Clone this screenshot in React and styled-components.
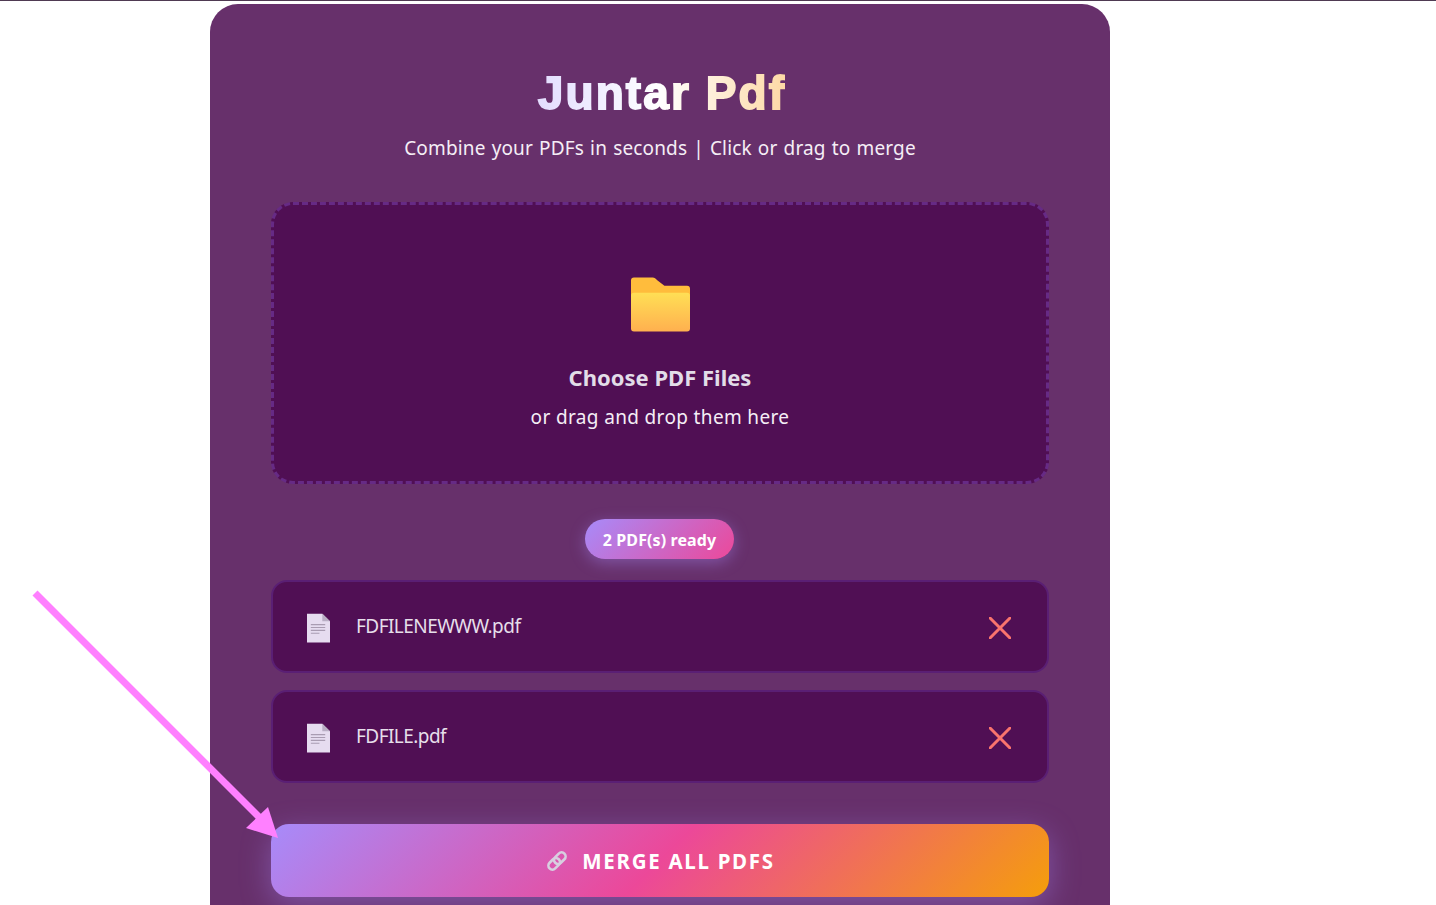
import React from "react";
import styled, { createGlobalStyle } from "styled-components";

const Global = createGlobalStyle`
  html, body { margin: 0; padding: 0; background: #fff; height: 905px; overflow: hidden; }
  body { font-family: "Noto Sans", "Noto Sans CJK KR", sans-serif; }
`;
const Page = styled.div`
  position: relative;
  height: 905px;
  overflow: hidden;
  background: #fff;
`;
const TopRule = styled.div`
  height: 1px;
  background: #4f3a52;
  margin-bottom: 3px;
`;
const Card = styled.main`
  width: 900px;
  margin-left: 210px;
  box-sizing: border-box;
  padding: 61px 61px 40px;
  height: 1000px;
  background: #67306b;
  border-radius: 28px 28px 0 0;
`;
const Title = styled.h1`
  margin: 0;
  padding-left: 4px;
  height: 56px;
  line-height: 56px;
  text-align: center;
  font-family: "Liberation Sans", Arial, sans-serif;
  font-weight: 700;
  font-size: 46px;
  letter-spacing: 2.1px;
  color: transparent;
  background: linear-gradient(90deg, #e2dcff 0%, #ffffff 50%, #fdd9a6 100%);
  background-size: 250px 100%;
  background-position: center;
  background-repeat: no-repeat;
  -webkit-background-clip: text;
  background-clip: text;
  -webkit-text-fill-color: transparent;
  -webkit-text-stroke: 1.8px transparent;
`;
const Subtitle = styled.p`
  margin: 13px 0 0;
  height: 28px;
  line-height: 28px;
  text-align: center;
  font-size: 19px;
  letter-spacing: 0.15px;
  word-spacing: 1px;
  color: #f5eef6;
`;
const Drop = styled.section`
  box-sizing: border-box;
  margin-top: 40px;
  height: 282px;
  border: 3px dashed #662a85;
  border-radius: 22px;
  background: #500f54;
  display: flex;
  flex-direction: column;
  align-items: center;
  padding-top: 72px;
`;
const FolderIcon = styled.svg`
  display: block;
  width: 59px;
  height: 56px;
`;
const DropTitle = styled.h2`
  margin: 29px 0 0;
  height: 30px;
  line-height: 30px;
  font-size: 22px;
  font-weight: 700;
  color: #e2dde8;
`;
const DropHint = styled.p`
  margin: 12px 0 0;
  height: 26px;
  line-height: 26px;
  font-size: 19px;
  letter-spacing: 0.35px;
  color: #f5eef6;
`;
const BadgeRow = styled.div`
  display: flex;
  justify-content: center;
  margin-top: 35px;
`;
const Badge = styled.div`
  box-sizing: border-box;
  width: 149px;
  height: 40px;
  margin-right: 1px;
  padding-top: 1px;
  border-radius: 20px;
  display: flex;
  align-items: center;
  justify-content: center;
  font-size: 16px;
  font-weight: 700;
  letter-spacing: 0.1px;
  color: #fff;
  background: linear-gradient(135deg, #a78bfa 0%, #ec4899 100%);
  box-shadow: 0 4px 15px rgba(167, 139, 250, 0.4);
`;
const FileList = styled.ul`
  list-style: none;
  margin: 21px 0 0;
  padding: 0;
  display: flex;
  flex-direction: column;
  gap: 17px;
`;
const FileRow = styled.li`
  box-sizing: border-box;
  height: 93px;
  display: flex;
  align-items: center;
  padding: 0 36px 0 34px;
  border: 2px solid #5a1f74;
  border-radius: 16px;
  background: #500f54;
`;
const DocIcon = styled.svg`
  width: 23px;
  height: 30px;
  margin-top: 3px;
  flex: none;
`;
const FileName = styled.span`
  margin-left: 26px;
  flex: 1;
  font-size: 19px;
  letter-spacing: -0.55px;
  color: #e6dfea;
  position: relative;
  top: -1px;
`;
const CloseIcon = styled.svg`
  width: 22px;
  height: 22px;
  margin-top: 3px;
  flex: none;
`;
const MergeButton = styled.button`
  display: flex;
  align-items: center;
  justify-content: center;
  gap: 13px;
  width: 778px;
  height: 73px;
  margin-top: 41px;
  padding: 1px 0 0;
  border: 0;
  border-radius: 18px;
  font-family: inherit;
  font-size: 20.5px;
  font-weight: 700;
  letter-spacing: 1.7px;
  color: #fff;
  background: linear-gradient(135deg, #a78bfa 0%, #ec4899 50%, #f59e0b 100%);
  box-shadow: 0 8px 30px rgba(167, 139, 250, 0.4);
`;
const LinkIcon = styled.svg`
  width: 24px;
  height: 24px;
  flex: none;
`;
const ArrowOverlay = styled.svg`
  position: absolute;
  left: 0;
  top: 0;
  width: 1436px;
  height: 905px;
  pointer-events: none;
`;

const Doc = () => (
  <DocIcon viewBox="0 0 24 30">
    <path d="M0 0H16L24 8V30H0Z" fill="#e6dcf0" />
    <path d="M16 0L24 8H16Z" fill="#b9aec4" />
    <path d="M4 11.5H19M4 14.5H19M4 17.5H19M4 20.5H13" stroke="#a99cb2" strokeWidth="1.2" />
  </DocIcon>
);
const Close = () => (
  <CloseIcon viewBox="0 0 22 22">
    <path d="M1 1L21 21M21 1L1 21" stroke="#f9746d" strokeWidth="3" strokeLinecap="round" />
  </CloseIcon>
);

export default function App() {
  return (
    <Page>
      <Global />
      <TopRule />
      <Card>
        <Title>Juntar Pdf</Title>
        <Subtitle>Combine your PDFs in seconds | Click or drag to merge</Subtitle>
        <Drop>
          <FolderIcon viewBox="0 0 60 56">
            <defs>
              <linearGradient id="fold" x1="0" y1="0" x2="0" y2="1">
                <stop offset="0" stopColor="#ffdf55" />
                <stop offset="1" stopColor="#ffb04f" />
              </linearGradient>
            </defs>
            <path d="M3 0H22C24 0 25 1 27 3L34 8.500H57C59 8.500 60 9.500 60 11.500V20H0V3C0 1 1 0 3 0Z" fill="#ffbc3c" />
            <path d="M3 15.500H57C59 15.500 60 16.500 60 18.500V52C60 54 59 55 57 55H3C1 55 0 54 0 52V18.500C0 16.500 1 15.500 3 15.500Z" fill="url(#fold)" />
          </FolderIcon>
          <DropTitle>Choose PDF Files</DropTitle>
          <DropHint>or drag and drop them here</DropHint>
        </Drop>
        <BadgeRow>
          <Badge>2 PDF(s) ready</Badge>
        </BadgeRow>
        <FileList>
          <FileRow>
            <Doc />
            <FileName>FDFILENEWWW.pdf</FileName>
            <Close />
          </FileRow>
          <FileRow>
            <Doc />
            <FileName>FDFILE.pdf</FileName>
            <Close />
          </FileRow>
        </FileList>
        <MergeButton>
          <LinkIcon viewBox="0 0 24 24" fill="none" stroke="#d8cfe0" strokeWidth="2.600">
            <g transform="rotate(-45 12 12)">
              <rect x="1.500" y="8" width="13" height="8" rx="4" />
              <rect x="9.500" y="8" width="13" height="8" rx="4" />
            </g>
          </LinkIcon>
          MERGE ALL PDFS
        </MergeButton>
      </Card>
      <ArrowOverlay viewBox="0 0 1436 905">
        <path d="M35 593L262 820" stroke="#ff80ff" strokeWidth="7" fill="none" />
        <path d="M278 838L246 828L268 807Z" fill="#ff80ff" />
      </ArrowOverlay>
    </Page>
  );
}
